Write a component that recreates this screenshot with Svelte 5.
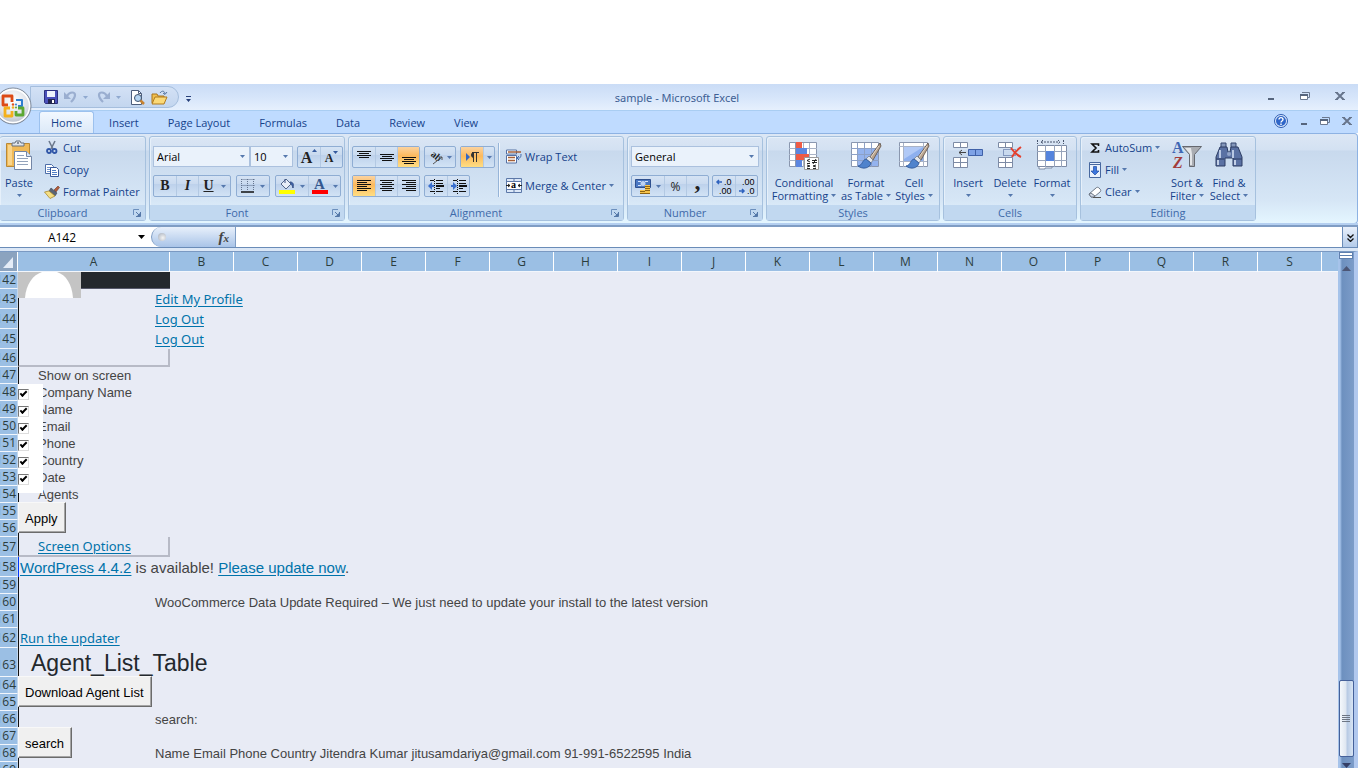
<!--
  Component: App.svelte
  Description: Spreadsheet window with ribbon, formula bar and an open worksheet.
-->
<script lang="ts">
	const tabs = ['Home', 'Insert', 'Page Layout', 'Formulas', 'Data', 'Review', 'View'];
	const columns = 'ABCDEFGHIJKLMNOPQRST'.split('');

	type Row = {
		n: number;
		size?: string;
		kind?: string;
		text?: string;
	};

	const rows: Row[] = [
		{ n: 142, kind: 'avatar' },
		{ n: 143, size: 'tall', kind: 'link', text: 'Edit My Profile' },
		{ n: 144, size: 'tall', kind: 'link', text: 'Log Out' },
		{ n: 145, size: 'tall', kind: 'link', text: 'Log Out' },
		{ n: 146, size: 'mid', kind: 'box' },
		{ n: 147, kind: 'indent', text: 'Show on screen' },
		{ n: 148, kind: 'check', text: 'Company Name' },
		{ n: 149, kind: 'check', text: 'Name' },
		{ n: 150, kind: 'check', text: 'Email' },
		{ n: 151, kind: 'check', text: 'Phone' },
		{ n: 152, kind: 'check', text: 'Country' },
		{ n: 153, kind: 'check', text: 'Date' },
		{ n: 154, kind: 'indent', text: 'Agents' },
		{ n: 155, kind: 'button', text: 'Apply' },
		{ n: 156 },
		{ n: 157, size: 'tall', kind: 'options', text: 'Screen Options' },
		{ n: 158, size: 'tall', kind: 'notice' },
		{ n: 159 },
		{
			n: 160,
			kind: 'far',
			text: 'WooCommerce Data Update Required – We just need to update your install to the latest version'
		},
		{ n: 161 },
		{ n: 162, size: 'tall', kind: 'run', text: 'Run the updater' },
		{ n: 163, size: 'heading', kind: 'heading', text: 'Agent_List_Table' },
		{ n: 164, kind: 'button', text: 'Download Agent List' },
		{ n: 165 },
		{ n: 166, kind: 'far', text: 'search:' },
		{ n: 167, kind: 'button', text: 'search' },
		{
			n: 168,
			kind: 'far',
			text: 'Name Email Phone Country Jitendra Kumar jitusamdariya@gmail.com 91-991-6522595 India'
		},
		{ n: 169 }
	];

	// line positions for the six align icons
	const vAlign = [
		{ name: 'Top Align', y: 3, on: false },
		{ name: 'Middle Align', y: 6, on: false },
		{ name: 'Bottom Align', y: 9, on: true }
	];
	const hAlign = [
		{ name: 'Align Left', on: true, lines: [[1, 15], [1, 11], [1, 15], [1, 11], [1, 15], [1, 11]] },
		{ name: 'Center', on: false, lines: [[1, 15], [3, 13], [1, 15], [3, 13], [1, 15], [3, 13]] },
		{ name: 'Align Right', on: false, lines: [[1, 15], [5, 15], [1, 15], [5, 15], [1, 15], [5, 15]] }
	];
</script>

{#snippet arrow()}
	<svg class="arrow" width="5" height="3" viewBox="0 0 5 3" aria-hidden="true"><path d="M0 0h5L2.500 3z" fill="#5578ad" /></svg>
{/snippet}

{#snippet caption(name: string, launcher: boolean)}
	<div class="caption">
		<span>{name}</span>
		{#if launcher}
			<button class="launcher" aria-label="{name} settings">
				<svg width="8" height="8" viewBox="0 0 8 8"><path d="M.5 6V.5H6" fill="none" stroke="#6c8fbd" /><path d="M3 3l3 3M7.500 3v4.500H3" fill="none" stroke="#5578a8" /><path d="M4 7h3V4z" fill="#5578a8" /></svg>
			</button>
		{/if}
	</div>
{/snippet}

{#snippet restore()}
	<svg width="10" height="8" viewBox="0 0 10 8"><path d="M2 .5h7.500v5H8" fill="none" stroke="#6b7990" /><path d="M.5 3v4.500h7V3" fill="#fff" stroke="#6b7990" /><path d="M0 3h8" stroke="#56657d" stroke-width="2" /></svg>
{/snippet}

{#snippet cross()}
	<svg width="10" height="8" viewBox="0 0 10 8"><path d="M1.500 .5l7 7M8.500 .5l-7 7" stroke="#67758c" stroke-width="2" /><path d="M0 .5h3M7 .5h3M0 7.500h3M7 7.500h3" stroke="#67758c" /></svg>
{/snippet}

{#snippet brush()}
	<path d="M30 3L20 17l3 3L31 6z" fill="#b9a48f" stroke="#5c4c42" stroke-width=".8" />
	<path d="M29 6l-8 11" stroke="#e6dacb" />
	<path d="M19 16l4 4-2 3-5-4z" fill="#e4e7ec" stroke="#6d7785" stroke-width=".7" />
	<path d="M16 19c-4 1-3 6-8 7 5 4 12 2 13-3z" fill="#4f83cc" stroke="#2d5596" stroke-width=".8" />
{/snippet}

<div class="window">
	<header class="titlebar">
		<button class="orb" aria-label="Office Button">
			<svg width="38" height="38" viewBox="0 0 38 38">
				<defs>
					<radialGradient id="orb" cx=".5" cy=".35" r=".7">
						<stop offset="0" stop-color="#fff" /><stop offset=".6" stop-color="#dde1e9" /><stop offset="1" stop-color="#a9b1bf" />
					</radialGradient>
				</defs>
				<circle cx="19" cy="19" r="18" fill="url(#orb)" stroke="#7e8999" />
				<circle cx="19" cy="19" r="16.500" fill="none" stroke="#fff" stroke-width="1.500" />
				<g fill="none" stroke-width="2.800" stroke-linejoin="round">
					<path d="M14 18H9V9h9v6" stroke="#dd4a16" />
					<path d="M22 13h6v6h-4" stroke="#2f7fd0" stroke-width="2" />
					<path d="M16 21h-5v8h7v-5" stroke="#f4b01c" />
					<path d="M24 21h5v7h-7v-4" stroke="#5ca832" />
				</g>
				<circle cx="19" cy="17.500" r="1.200" fill="#e0511c" /><circle cx="22" cy="17.500" r="1" fill="#2f7fd0" />
				<circle cx="19" cy="20.500" r="1.200" fill="#f4b01c" /><circle cx="22" cy="20.500" r="1" fill="#5ca832" />
			</svg>
		</button>
		<div class="quick">
			<button aria-label="Save">
				<svg width="14" height="14" viewBox="0 0 14 14"><path d="M.5 .5h13v13h-12l-1-1z" fill="#4a50ba" stroke="#2c307f" /><path d="M3 1h8v6H3z" fill="#eef3fc" /><path d="M4 9h7v5H4z" fill="#23264f" /><path d="M8 10h2v3H8z" fill="#fff" /></svg>
			</button>
			<button aria-label="Undo">
				<svg width="13" height="12" viewBox="0 0 13 12"><path d="M0 1v7h7z" fill="#9aaed0" /><path d="M3 5c3-5 8-4 8-1 0 3-2 5-4 7" fill="none" stroke="#9aaed0" stroke-width="2.200" /></svg>
			</button>
			<span class="pale">{@render arrow()}</span>
			<button aria-label="Redo">
				<svg width="13" height="12" viewBox="0 0 13 12"><path d="M13 1v7H6z" fill="#9aaed0" /><path d="M10 5C7 0 2 1 2 4c0 3 2 5 4 7" fill="none" stroke="#9aaed0" stroke-width="2.200" /></svg>
			</button>
			<span class="pale">{@render arrow()}</span>
			<button aria-label="Print Preview">
				<svg width="15" height="15" viewBox="0 0 15 15"><path d="M1.500 .5h7l3 3v11h-10z" fill="#fff" stroke="#4e5e7b" /><path d="M8.500 .5v3h3" fill="none" stroke="#4e5e7b" /><circle cx="8" cy="8" r="3.500" fill="#b5d4f1" stroke="#3e526e" /><path d="M10.500 10.500l3.500 3.500" stroke="#c7822f" stroke-width="2.500" /></svg>
			</button>
			<button aria-label="Open">
				<svg width="17" height="15" viewBox="0 0 17 15"><path d="M1 13V4h5l1 2h6v7z" fill="#f0c04f" stroke="#a9741d" /><path d="M1 14l3-7h12l-3 7z" fill="#fbd977" stroke="#b07b1f" /><path d="M9 3c2-3 5-2 5 1M12 3l2 1.500L16 2" fill="none" stroke="#55749f" /></svg>
			</button>
		</div>
		<button class="customize" aria-label="Customize Quick Access Toolbar">
			<svg width="5" height="6" viewBox="0 0 5 6"><path d="M0 0h5v1H0zM0 3h5L2.500 6z" fill="#27407a" /></svg>
		</button>
		<h1>sample - Microsoft Excel</h1>
		<div class="sys">
			<button aria-label="Minimize"><svg width="8" height="8" viewBox="0 0 8 8"><path d="M1 7h6" stroke="#56657d" stroke-width="2" /></svg></button>
			<button aria-label="Restore">{@render restore()}</button>
			<button aria-label="Close">{@render cross()}</button>
		</div>
	</header>

	<nav class="tabs">
		{#each tabs as tab, i}
			<button class="tab" class:active={i === 0}>{tab}</button>
		{/each}
		<div class="doc">
			<button aria-label="Help">
				<svg width="14" height="14" viewBox="0 0 14 14"><circle cx="7" cy="7" r="6.500" fill="#dce9fb" stroke="#2e5cb0" /><circle cx="7" cy="7" r="5" fill="#2f66c8" /><path d="M5 5.500c0-2.500 4-2.500 4 0 0 1.500-2 1.500-2 3M7 9.500V11" fill="none" stroke="#fff" stroke-width="1.400" /></svg>
			</button>
			<button aria-label="Minimize Window"><svg width="8" height="8" viewBox="0 0 8 8"><path d="M1 7h6" stroke="#56657d" stroke-width="2" /></svg></button>
			<button aria-label="Restore Window">{@render restore()}</button>
			<button aria-label="Close Window">{@render cross()}</button>
		</div>
	</nav>

	<section class="ribbon">
		<!-- Clipboard -->
		<div class="group clipboard">
			<div class="body">
				<button class="big">
					<svg width="28" height="30" viewBox="0 0 28 30">
						<path d="M1.500 3.500h23v23h-23z" fill="#f0b957" stroke="#b98836" /><path d="M3 5h4v20H3z" fill="#f9d48b" />
						<path d="M7 6V3h3l1-2h4l1 2h3v3z" fill="#dfe3ea" stroke="#66707f" /><circle cx="13" cy="3" r="1" fill="#66707f" />
						<path d="M9.500 11.500h12l5 5v13h-17z" fill="#fff" stroke="#7386a6" /><path d="M21.500 11.500v5h5" fill="#dbe6f5" stroke="#7386a6" />
						<path d="M12 15.500h7M12 18.500h11M12 21.500h11M12 24.500h11" stroke="#93a3bb" />
					</svg>
					<span>Paste</span>
					{@render arrow()}
				</button>
				<div class="stack">
					<button class="item">
						<svg width="16" height="15" viewBox="0 0 16 15"><path d="M5 1l4 8M11 1L7 9" stroke="#6e7b8f" stroke-width="1.600" /><circle cx="5" cy="11" r="2" fill="none" stroke="#3056a7" stroke-width="1.800" /><circle cx="10.500" cy="11" r="2" fill="none" stroke="#3056a7" stroke-width="1.800" /></svg>
						Cut
					</button>
					<button class="item">
						<svg width="16" height="14" viewBox="0 0 16 14"><path d="M1.500 1.500h6l2 2v7h-8z" fill="#fff" stroke="#4d6ea8" /><path d="M3 4.500h4M3 6.500h3M3 8.500h3" stroke="#6e93cd" /><path d="M6.500 4.500h6l2 2v7h-8z" fill="#fff" stroke="#37589a" /><path d="M8 7.500h4M8 9.500h5M8 11.500h5" stroke="#4f7cc4" /></svg>
						Copy
					</button>
					<button class="item">
						<svg width="16" height="14" viewBox="0 0 16 14"><path d="M10 5l4-4 1.500 1.500L12 7z" fill="#b05c3c" stroke="#733a24" stroke-width=".6" /><path d="M7 3l6 5-2 3-6-5z" fill="#5a6577" stroke="#3c4452" stroke-width=".6" /><path d="M5 6L.5 7 6 13.500 11 11z" fill="#f5df85" stroke="#a98a2e" stroke-width=".8" /></svg>
						Format Painter
					</button>
				</div>
			</div>
			{@render caption('Clipboard', true)}
		</div>

		<!-- Font -->
		<div class="group font">
			<div class="body rows">
				<div class="line">
					<div class="pair">
						<span class="drop family"><select aria-label="Font"><option>Arial</option></select>{@render arrow()}</span>
						<span class="drop size"><select aria-label="Font Size"><option>10</option></select>{@render arrow()}</span>
					</div>
					<div class="set">
						<button class="tool serif grow" aria-label="Increase Font Size">A<svg width="5" height="3" viewBox="0 0 5 3"><path d="M0 3h5L2.500 0z" fill="#355a9e" /></svg></button>
						<button class="tool serif shrink" aria-label="Decrease Font Size">A<svg width="5" height="3" viewBox="0 0 5 3"><path d="M0 0h5L2.500 3z" fill="#355a9e" /></svg></button>
					</div>
				</div>
				<div class="line">
					<div class="set">
						<button class="tool serif"><b>B</b></button>
						<button class="tool serif"><i>I</i></button>
						<button class="tool serif wide"><u>U</u>{@render arrow()}</button>
					</div>
					<div class="set">
						<button class="tool wider" aria-label="Borders">
							<svg width="14" height="14" viewBox="0 0 14 14"><path d="M.5 .5h13M.5 6.500h13M.5 0v12M6.500 0v12M12.500 0v12" stroke="#63738e" stroke-dasharray="1 1" /><path d="M0 13h13" stroke="#111" stroke-width="1.500" /></svg>
							{@render arrow()}
						</button>
					</div>
					<div class="set">
						<button class="tool wider" aria-label="Fill Color">
							<svg width="16" height="16" viewBox="0 0 16 16"><path d="M2 6l5-5 5 5-5 5z" fill="#e8eef7" stroke="#54678a" /><path d="M6 5V1M11 4c3 0 4 2 3 6-1-3-1-3-2-4z" fill="#3a65b3" stroke="#3a5286" /><path d="M0 12h16v4H0z" fill="#ff0" /></svg>
							{@render arrow()}
						</button>
						<button class="tool wider" aria-label="Font Color">
							<span class="fontcolor">A</span>
							{@render arrow()}
						</button>
					</div>
				</div>
			</div>
			{@render caption('Font', true)}
		</div>

		<!-- Alignment -->
		<div class="group alignment">
			<div class="body">
				<div class="rows">
					<div class="line">
						<div class="set">
							{#each vAlign as a}
								<button class="tool" class:on={a.on} aria-label={a.name}>
									<svg width="16" height="16" viewBox="0 0 16 16"><path d="M1 {a.y - 0.5}h14M3 {a.y + 1.5}h10M1 {a.y + 3.5}h14M3 {a.y + 5.5}h10" stroke="#111" /></svg>
								</button>
							{/each}
						</div>
						<div class="set">
							<button class="tool orient" aria-label="Orientation">
								<svg width="16" height="16" viewBox="0 0 16 16"><text x="2" y="7" font-size="10" font-family="Liberation Serif, serif" font-weight="bold" transform="rotate(40 3 7)" fill="#222">ab</text><path d="M5 15l9-7M11 8h3v3" fill="none" stroke="#555" /></svg>
								{@render arrow()}
							</button>
						</div>
						<div class="set">
							<button class="tool on" aria-label="Text Direction">
								<svg width="14" height="12" viewBox="0 0 14 12"><path d="M1 2l4 4-4 4z" fill="#3467c4" /><path d="M8.500 2v9M11.500 2v9M7 1.500h7" stroke="#333" /><path d="M9 1c-4 0-4 6 0 6z" fill="#333" /></svg>
							</button>
							<button class="tool slim" aria-label="Text Direction options">{@render arrow()}</button>
						</div>
					</div>
					<div class="line">
						<div class="set">
							{#each hAlign as a}
								<button class="tool" class:on={a.on} aria-label={a.name}>
									<svg width="16" height="14" viewBox="0 0 16 14">
										{#each a.lines as [x1, x2], i}<path d="M{x1} {i * 2 + 1.5}H{x2}" stroke="#111" />{/each}
									</svg>
								</button>
							{/each}
						</div>
						<div class="set">
							<button class="tool" aria-label="Decrease Indent">
								<svg width="16" height="15" viewBox="0 0 16 15"><path d="M2 1.500h4M8 1.500h7M8 4.500h7M8 9.500h4M2 12.500h4M8 12.500h7" stroke="#111" /><path d="M8 7h8" stroke="#111" stroke-width="2" /><path d="M6.500 0v15" stroke="#111" stroke-dasharray="1 1" /><path d="M0 7l4-4v3h2v2H4v3z" fill="#3a6fce" /></svg>
							</button>
							<button class="tool" aria-label="Increase Indent">
								<svg width="16" height="15" viewBox="0 0 16 15"><path d="M2 1.500h4M8 1.500h7M8 4.500h7M8 9.500h4M2 12.500h4M8 12.500h7" stroke="#111" /><path d="M8 7h8" stroke="#111" stroke-width="2" /><path d="M6.500 0v15" stroke="#111" stroke-dasharray="1 1" /><path d="M6 7L2 3v3H0v2h2v3z" fill="#3a6fce" /></svg>
							</button>
						</div>
					</div>
				</div>
				<div class="rule"></div>
				<div class="rows merge">
					<button class="item">
						<svg width="16" height="15" viewBox="0 0 16 15"><path d="M.5 1h10v4H.5zM.5 6.500h10v7.500H.5z" fill="#fff" stroke="#5470a3" /><path d="M2 3h13M2 8.500h7M2 11.500h7" stroke="#a56038" stroke-width="1.500" /><path d="M15 5c0 4-1 4-3 4M13 7l-2 2 2 2" fill="none" stroke="#3e67ac" /></svg>
						Wrap Text
					</button>
					<button class="item">
						<svg width="16" height="15" viewBox="0 0 16 15"><path d="M.5 .5h15v14H.5zM.5 3.500h15M.5 11.500h15M8 .5v3M8 11.500v3" fill="#dce8f8" stroke="#5c78a8" /><path d="M1 4h14v7H1z" fill="#fff" /><path d="M0 7.500h4M2 6l2 1.500L2 9M16 7.500h-4M14 6l-2 1.500L14 9" fill="none" stroke="#222" /><text x="5" y="10" font-size="10" font-weight="bold" font-family="Liberation Serif, serif">a</text></svg>
						Merge &amp; Center
						{@render arrow()}
					</button>
				</div>
			</div>
			{@render caption('Alignment', true)}
		</div>

		<!-- Number -->
		<div class="group number">
			<div class="body rows">
				<div class="line">
					<span class="drop format"><select aria-label="Number Format"><option>General</option></select>{@render arrow()}</span>
				</div>
				<div class="line">
					<div class="set">
						<button class="tool wider" aria-label="Accounting Number Format">
							<svg width="16" height="16" viewBox="0 0 16 16"><path d="M.5 1.500h15v8H.5z" fill="#4b78c4" stroke="#2f508e" /><path d="M3 3.500h3M3 7.500h3M10 3.500h3" stroke="#d8e5fa" /><circle cx="8" cy="5.500" r="2.500" fill="#bcd2f4" /><path d="M10 7h5v8h-5zM5 12h5v3H5z" fill="#f6c34a" /><path d="M10 8.500h5M10 10.500h5M10 12.500h5M5 13.500h5M5 15.500h10" stroke="#8e6413" /></svg>
							{@render arrow()}
						</button>
						<button class="tool">%</button>
						<button class="tool serif comma"><b>,</b></button>
					</div>
					<div class="set">
						<button class="tool" aria-label="Increase Decimal"><svg width="18" height="20" viewBox="0 0 18 20"><text x="9" y="9" font-size="9">.0</text><text x="4" y="18" font-size="9">.00</text><path d="M7 6H2M4 4L2 6l2 2" fill="none" stroke="#2f63bf" stroke-width="1.500" /></svg></button>
						<button class="tool" aria-label="Decrease Decimal"><svg width="18" height="20" viewBox="0 0 18 20"><text x="4" y="9" font-size="9">.00</text><text x="9" y="18" font-size="9">.0</text><path d="M1 15h5M4 13l2 2-2 2" fill="none" stroke="#2f63bf" stroke-width="1.500" /></svg></button>
					</div>
				</div>
			</div>
			{@render caption('Number', true)}
		</div>

		<!-- Styles -->
		<div class="group styles">
			<div class="body">
				<button class="big cond">
					<svg width="32" height="30" viewBox="0 0 32 30">
						<path d="M1.500 2.500h27v24h-27z" fill="#fff" stroke="#8a97af" /><path d="M1 8.500h28M1 14.500h28M1 20.500h28M15.500 3v24M21.500 3v24" stroke="#a9b3c6" />
						<path d="M8 2h6v6H8zM8 14h13v6H8z" fill="#ee5b45" /><path d="M8 8h11v6H8zM8 20h6v7H8z" fill="#5c86e0" /><path d="M7.500 2v25" stroke="#8a97af" />
						<path d="M16.500 17.500h14v12h-14z" fill="#fff" stroke="#999" /><path d="M22 19l-3 1.500 3 1.500M19 23.500h3M24 20.500h5M24 22.500h5M28 19l-3 5M19 25l3 1-3 1M19 28.500h3M28 25l-3 1 3 1M25 28.500h3" fill="none" stroke="#111" stroke-width=".9" />
					</svg>
					<span>Conditional</span><span>Formatting {@render arrow()}</span>
				</button>
				<button class="big table">
					<svg width="32" height="30" viewBox="0 0 32 30">
						<path d="M1.500 2.500h27v24h-27z" fill="#fff" stroke="#8a97af" /><path d="M8 9h20v17H8z" fill="#94b3ee" />
						<path d="M1 8.500h28M1 14.500h28M1 20.500h28M7.500 3v24M14.500 3v24M21.500 3v24" stroke="#8da1c6" />
						{@render brush()}
					</svg>
					<span>Format</span><span>as Table {@render arrow()}</span>
				</button>
				<button class="big cell">
					<svg width="32" height="30" viewBox="0 0 32 30">
						<path d="M1.500 2.500h28v24h-28z" fill="#fff" stroke="#8a97af" /><path d="M1 6.500h28M1 21.500h28M5.500 3v24M25.500 3v24" stroke="#a9b3c6" />
						<path d="M6 7h19v14H6z" fill="#8eb0ef" /><path d="M6 7h19L6 19z" fill="#b1c9f6" />
						{@render brush()}
					</svg>
					<span>Cell</span><span>Styles {@render arrow()}</span>
				</button>
			</div>
			{@render caption('Styles', false)}
		</div>

		<!-- Cells -->
		<div class="group cells">
			<div class="body">
				<button class="big">
					<svg width="32" height="30" viewBox="0 0 32 30">
						<path d="M1.500 2.500h14v5h-14zM8.500 2.500v5M1.500 17.500h14v10h-14zM8.500 17.500v10M1.500 22.500h14" fill="#fff" stroke="#7d8ba5" />
						<path d="M16.500 9.500h14v6h-14z" fill="#7ea2e6" stroke="#3f61a8" /><path d="M23.500 9.500v6" stroke="#3f61a8" /><path d="M14 12.500H7M10 10l-3 2.500L10 15" fill="none" stroke="#444" />
					</svg>
					<span>Insert</span>
					{@render arrow()}
				</button>
				<button class="big">
					<svg width="32" height="30" viewBox="0 0 32 30">
						<path d="M4.500 2.500h14v5h-14zM11.500 2.500v5M4.500 17.500h14v10h-14zM11.500 17.500v10M4.500 22.500h14" fill="#fff" stroke="#7d8ba5" />
						<path d="M9.500 9.500h12v6h-12z" fill="none" stroke="#3d5690" stroke-dasharray="1 1" /><path d="M17 8c3 4 5 7 10 9M27 7c-4 3-7 6-9 10" fill="none" stroke="#e5402e" stroke-width="2" />
					</svg>
					<span>Delete</span>
					{@render arrow()}
				</button>
				<button class="big">
					<svg width="32" height="30" viewBox="0 0 32 30">
						<path d="M1.500 0v4M27.500 0v4M5 2h18M7 0L5 2l2 2M22 0l2 2-2 2" fill="none" stroke="#46536b" stroke-dasharray="2 1" />
						<path d="M1.500 5.500h29v21h-29z" fill="#fff" stroke="#7d8ba5" /><path d="M1 11.500h30M1 20.500h30M9.500 5v22M18.500 5v22M25.500 5v22" stroke="#97a4bb" /><path d="M10 11h8v10h-8z" fill="#5584dd" />
						<path d="M3 27v2h6v-1h7v-1" fill="#fff" stroke="#7d8ba5" />
					</svg>
					<span>Format</span>
					{@render arrow()}
				</button>
			</div>
			{@render caption('Cells', false)}
		</div>

		<!-- Editing -->
		<div class="group editing">
			<div class="body">
				<div class="stack">
					<button class="item">
						<svg width="14" height="14" viewBox="0 0 14 14"><path d="M10.500 5V3H4l4 4-4 4h6.500V9" fill="none" stroke="#111" stroke-width="1.600" /></svg>
						AutoSum {@render arrow()}
					</button>
					<button class="item">
						<svg width="14" height="16" viewBox="0 0 14 16"><path d="M1.500 .5h11v15h-11z" fill="#e9f1fd" stroke="#47689f" /><path d="M1 2.500h12" stroke="#47689f" /><path d="M5.500 4.500h3V9h2.500l-4 4-4-4h2.500z" fill="#3c76de" stroke="#1f4ca0" stroke-width=".7" /></svg>
						Fill {@render arrow()}
					</button>
					<button class="item">
						<svg width="14" height="14" viewBox="0 0 14 14"><path d="M1 9l7-6c1-1 2-1 3 0l1 1c1 1 1 2 0 3l-6 5H3z" fill="#fff" stroke="#6d7786" /><path d="M1 9l2 3h3l1-1-4-3z" fill="#cfd6e2" stroke="#6d7786" /><path d="M5 12.500h8" stroke="#555" /></svg>
						Clear {@render arrow()}
					</button>
				</div>
				<button class="big">
					<svg width="32" height="30" viewBox="0 0 32 30">
						<text x="1" y="13" font-size="16" font-weight="bold" font-family="Liberation Serif, serif" fill="#3f66b3">A</text>
						<text x="2" y="28" font-size="16" font-weight="bold" font-style="italic" font-family="Liberation Serif, serif" fill="#a23c3c">Z</text>
						<path d="M11.500 6.500h19l-7 8v12h-5v-12z" fill="#a9acb2" stroke="#65686f" /><path d="M14 8h6l1 6v11h-2V14z" fill="#e3e5e8" />
					</svg>
					<span>Sort &amp;</span><span>Filter {@render arrow()}</span>
				</button>
				<button class="big">
					<svg width="32" height="30" viewBox="0 0 32 30">
						<path d="M8 3h5v5H8zM18 3h5v5h-5z" fill="#8396ba" stroke="#34466f" /><path d="M7 7h7l1 5h2l1-5h7l4 10v9h-9v-8h-8v8H3v-9z" fill="#5a71a3" stroke="#2c3c63" />
						<path d="M7 10v8M20 10v8" stroke="#b9c8e3" stroke-width="2" /><path d="M3 19h8M20 19h9" stroke="#2c3c63" /><path d="M5 20v5M22 20v5" stroke="#c2cfe6" stroke-width="2" /><circle cx="16" cy="14" r="2" fill="#93a5c9" />
					</svg>
					<span>Find &amp;</span><span>Select {@render arrow()}</span>
				</button>
			</div>
			{@render caption('Editing', false)}
		</div>
	</section>

	<div class="formula">
		<input class="namebox" aria-label="Name Box" value="A142" />
		<button class="namedrop" aria-label="Defined names"><svg width="7" height="4" viewBox="0 0 7 4"><path d="M0 0h7L3.500 4z" /></svg></button>
		<div class="fx">
			<span class="knob"></span>
			<button aria-label="Insert Function"><i>f</i><small>x</small></button>
		</div>
		<input class="value" aria-label="Formula Bar" />
		<button class="expand" aria-label="Expand Formula Bar"><svg width="7" height="8" viewBox="0 0 7 8"><path d="M.5 .5l3 3 3-3M.5 4.500l3 3 3-3" fill="none" stroke="#111" stroke-width="1.300" /></svg></button>
	</div>

	<div class="sheet">
		<div class="grid">
			<table>
				<thead>
					<tr>
						<th class="corner"><svg width="10" height="11" viewBox="0 0 10 11" aria-hidden="true"><path d="M10 0v11H0z" fill="#e4ecf7" /></svg></th>
						{#each columns as col}
							<th class:first={col === 'A'}>{col}</th>
						{/each}
					</tr>
				</thead>
				<tbody>
					{#each rows as row}
						<tr class={row.size}>
							<th><span>{row.n}</span></th>
							<td class={row.kind}>
								{#if row.kind === 'avatar'}
									<svg class="face" width="63" height="26" viewBox="0 0 63 26" role="img" aria-label="Avatar"><path d="M0 0h63v26H0z" fill="#c4c4c4" /><path d="M7 26C8 12 15 3 24 0h15c9 3 15 12 16 26z" fill="#fff" /></svg>
								{:else if row.kind === 'link' || row.kind === 'options' || row.kind === 'run'}
									<a href="#{row.n}">{row.text}</a>
								{:else if row.kind === 'check'}
									<label><input type="checkbox" checked /><span>{row.text}</span></label>
								{:else if row.kind === 'button'}
									<button>{row.text}</button>
								{:else if row.kind === 'notice'}
									<a href="#wordpress">WordPress 4.4.2</a> is available! <a href="#update">Please update now</a>.
								{:else if row.text}
									{row.text}
								{/if}
							</td>
							<td colspan={columns.length - 1}></td>
						</tr>
					{/each}
				</tbody>
			</table>
		</div>
		<div class="scroll">
			<div class="split"></div>
			<svg width="9" height="5" viewBox="0 0 9 5" aria-hidden="true"><path d="M0 5h9L4.500 0z" fill="#4c5676" /></svg>
			<div class="track"></div>
			<div class="thumb"><i></i><i></i><i></i><i></i></div>
			<div class="tail"></div>
			<svg width="9" height="5" viewBox="0 0 9 5" aria-hidden="true"><path d="M0 0h9L4.500 5z" fill="#343f66" /></svg>
		</div>
	</div>
</div>

<style>
	:global(body) {
		background: #fff;
		font-family: 'Open Sans', 'Noto Sans', sans-serif;
		font-size: 11px;
		color: #15428b;
	}

	button {
		font: inherit;
		color: inherit;
		border: 0;
		padding: 0;
		background: none;
	}

	svg {
		flex: none;
	}

	.window {
		box-sizing: border-box;
		height: 100vh;
		padding: 84px 8px 0 0;
		display: flex;
		flex-direction: column;
		overflow: hidden;
	}

	/* --- Title bar --- */
	.titlebar {
		box-sizing: border-box;
		position: relative;
		height: 27px;
		flex: none;
		display: flex;
		align-items: center;
		background: linear-gradient(#cadcf6, #d6e5fa 50%, #e6f0fd);
		border-bottom: 1px solid #a9cdf2;
	}

	.orb {
		position: absolute;
		left: -6px;
		top: 3px;
		z-index: 2;
	}

	.orb svg {
		display: block;
	}

	.quick {
		box-sizing: border-box;
		display: flex;
		align-items: center;
		gap: 6px;
		width: 149px;
		height: 22px;
		margin-left: 30px;
		padding-left: 13px;
		border: 1px solid #a5bedd;
		border-radius: 0 11px 11px 0;
		background: linear-gradient(#d3e1f5, #c3d6ef);
	}

	.quick button {
		display: flex;
	}

	.quick .pale {
		display: flex;
		opacity: 0.5;
		margin: 0 3px 0 0;
	}

	.customize {
		width: 18px;
	}

	h1 {
		flex: 1;
		margin: 0;
		padding-right: 110px;
		text-align: center;
		font-family: 'Noto Sans', sans-serif;
		font-size: 11px;
		font-weight: 400;
		color: #3e5f94;
	}

	.sys,
	.doc {
		display: flex;
		align-items: center;
	}

	.sys {
		gap: 25px;
		padding: 0 13px 3px 0;
	}

	.sys button,
	.doc button {
		display: flex;
	}

	/* --- Tabs --- */
	.tabs {
		flex: none;
		display: flex;
		height: 22px;
		padding-left: 39px;
		background: #bfdbff;
	}

	.tab {
		padding: 1px 14px 0 15px;
		line-height: 21px;
	}

	.tab.active {
		padding: 0 11px;
		border: 1px solid #9cc1ee;
		border-bottom: 0;
		border-radius: 3px 3px 0 0;
		background: linear-gradient(#f2f8ff, #dce9f8);
	}

	.doc {
		gap: 12px;
		margin-left: auto;
		padding: 0 6px 2px 0;
	}

	/* --- Ribbon --- */
	.ribbon {
		box-sizing: border-box;
		flex: none;
		display: flex;
		gap: 3px;
		height: 91px;
		padding: 2px 0;
		border: 1px solid #8db2e3;
		border-left: 0;
		border-radius: 0 4px 4px 0;
		background: linear-gradient(#dce7f5, #d3e1f2 18%, #c8d9ed 19%, #d6e6f6 75%, #e4f6ff);
		overflow: hidden;
	}

	.group {
		box-sizing: border-box;
		flex: none;
		display: flex;
		flex-direction: column;
		border: 1px solid #a6c1de;
		border-radius: 3px;
		box-shadow: inset 1px 1px 0 #e6f0fa;
	}

	.clipboard {
		width: 146px;
		border-left: 0;
	}

	.font {
		width: 196px;
	}

	.alignment {
		width: 276px;
	}

	.number {
		width: 136px;
	}

	.styles {
		width: 174px;
	}

	.cells {
		width: 134px;
	}

	.editing {
		width: 176px;
	}

	.body {
		flex: 1;
		display: flex;
		padding: 0 3px;
	}

	.caption {
		display: flex;
		height: 15px;
		line-height: 15px;
		background: #c1d8f0;
		color: #3e6aaa;
	}

	.caption span {
		flex: 1;
		text-align: center;
	}

	.caption:has(.launcher) span {
		padding-right: 20px;
	}

	.launcher {
		display: flex;
		align-items: center;
		width: 12px;
		margin-left: -12px;
	}

	.big {
		width: 42px;
		flex: none;
		display: flex;
		flex-direction: column;
		align-items: center;
		padding-top: 3px;
	}

	.big span {
		display: flex;
		align-items: center;
		gap: 3px;
		line-height: 13px;
		white-space: nowrap;
	}

	.big > svg:first-child {
		margin-bottom: 6px;
	}

	.big > .arrow {
		margin-top: 5px;
	}

	.clipboard .big {
		width: 36px;
	}

	.clipboard .body {
		padding: 0 1px;
	}

	.big.cond {
		width: 68px;
	}

	.big.table {
		width: 56px;
	}

	.big.cell {
		width: 40px;
	}

	.stack {
		display: flex;
		flex-direction: column;
		padding-left: 7px;
	}

	.editing .stack {
		width: 78px;
		padding-left: 4px;
	}

	.item {
		display: flex;
		align-items: center;
		gap: 3px;
		height: 22px;
		white-space: nowrap;
	}

	.stack .item {
		padding-bottom: 1px;
	}

	.rows {
		display: flex;
		flex-direction: column;
		gap: 8px;
		padding-top: 9px;
	}

	.merge .item {
		height: 21px;
	}

	.line {
		display: flex;
		gap: 4px;
		height: 21px;
	}

	.font .line {
		justify-content: space-between;
	}

	.pair {
		display: flex;
	}

	.drop {
		position: relative;
		height: 21px;
	}

	.drop select {
		box-sizing: border-box;
		appearance: none;
		width: 100%;
		height: 21px;
		margin: 0;
		padding: 0 3px;
		border: 1px solid #abc1de;
		border-radius: 0;
		background: #eaf2fb;
		font: inherit;
		color: #000;
	}

	.drop .arrow {
		position: absolute;
		right: 5px;
		top: 9px;
		pointer-events: none;
	}

	.family {
		width: 97px;
	}

	.size {
		width: 43px;
	}

	.format {
		width: 128px;
	}

	.set {
		box-sizing: border-box;
		display: flex;
		height: 22px;
		border: 1px solid #8fadd3;
		border-radius: 2px;
		background: linear-gradient(#d5e3f4, #c9daef 40%, #bdd1eb 41%, #d2e3f5);
	}

	.tool {
		display: flex;
		align-items: center;
		justify-content: center;
		gap: 3px;
		width: 22px;
		color: #222;
	}

	.tool + .tool {
		border-left: 1px solid #b3c9e3;
	}

	.tool.on {
		background: linear-gradient(#fbd3a0, #fcb95c 45%, #ffde83);
	}

	.tool.slim {
		width: 11px;
	}

	.tool.wide {
		width: 32px;
		gap: 7px;
	}

	.tool.wider {
		width: 32px;
		gap: 5px;
	}

	.tool.orient {
		width: 30px;
	}

	.serif {
		font: 700 14px 'Liberation Serif', serif;
	}

	.grow,
	.shrink {
		align-items: flex-start;
		gap: 0;
		padding-top: 2px;
	}

	.grow {
		font-size: 16px;
	}

	.shrink {
		font-size: 12px;
		padding-top: 4px;
	}

	.number .tool text {
		font-family: 'Liberation Sans', sans-serif;
	}

	.number .tool {
		font-size: 12px;
	}

	.number .comma {
		font-size: 24px;
		line-height: 10px;
		align-items: flex-start;
	}

	.number .line {
		gap: 3px;
	}

	.fontcolor {
		width: 16px;
		border-bottom: 4px solid #f00;
		font: 700 15px/12px 'Liberation Serif', serif;
		color: #34588f;
		text-align: center;
	}

	.rule {
		width: 1px;
		height: 54px;
		margin: 6px 6px 0 3px;
		background: #96b4d8;
		border-right: 1px solid #f0f6fd;
	}

	/* --- Formula bar --- */
	.formula {
		flex: none;
		display: flex;
		height: 20px;
		margin-top: 1px;
		border-top: 2px solid #7f9dc4;
		border-bottom: 1px solid #6a8cb8;
		background: #fff;
		box-shadow: 0 -2px 0 #b4cff0;
	}

	.formula input {
		box-sizing: border-box;
		border: 0;
		padding: 0;
		margin: 0;
		background: #fff;
		color: #000;
		font: 12px 'Open Sans', sans-serif;
		outline: 0;
	}

	.namebox {
		width: 124px;
		text-align: center;
	}

	.namedrop {
		display: flex;
		align-items: center;
		justify-content: center;
		width: 35px;
	}

	.fx {
		box-sizing: border-box;
		display: flex;
		align-items: center;
		justify-content: space-between;
		width: 85px;
		margin-left: -8px;
		padding: 0 6px;
		border: 1px solid #7f9dc4;
		border-width: 0 1px;
		border-radius: 11px 0 0 11px;
		background: linear-gradient(#e8f0fb, #a9c4e8);
	}

	.fx button {
		font: italic 700 15px/16px 'Liberation Serif', serif;
		color: #444;
	}

	.fx small {
		font-size: 11px;
	}

	.knob {
		width: 8px;
		height: 8px;
		border-radius: 50%;
		background: radial-gradient(circle at 60% 60%, #f4f4f4, #a3acba);
	}

	.formula .value {
		flex: 1;
		min-width: 0;
	}

	.expand {
		width: 16px;
		border: 1px solid #6a8cb8;
		border-width: 0 1px;
		background: linear-gradient(#e8f0fb, #b3cbea);
	}

	/* --- Worksheet --- */
	.sheet {
		flex: 1;
		min-height: 0;
		display: flex;
		border-top: 1px solid #7a99c2;
		box-shadow: 0 -3px 0 #dbe7f6;
		margin-top: 3px;
		border-right: 4px solid #b1c8ee;
	}

	.grid {
		flex: 1;
		min-width: 0;
		overflow: hidden;
		background: #e8ebf5;
	}

	table {
		width: 1386px;
		table-layout: fixed;
		border-collapse: separate;
		border-spacing: 0;
	}

	th {
		box-sizing: border-box;
		padding: 0;
		height: 17px;
		border: 1px solid #f2f6fc;
		border-width: 0 1px 1px 0;
		background: #9bbfe4;
		font-size: 12px;
		font-weight: 400;
		line-height: 16px;
		color: #2b3d3d;
		width: 64px;
	}

	thead th {
		height: 20px;
		border-right-color: #fff;
	}

	.corner {
		width: 18px;
		background: #8ba3bf;
		text-align: right;
		vertical-align: bottom;
	}

	.corner svg {
		display: block;
		margin: 0 4px 3px auto;
	}

	.first {
		width: 152px;
	}

	/* the gutter is narrow, so the leading digit runs out to the left */
	tbody th span {
		display: flex;
		justify-content: flex-end;
		width: 16px;
	}

	tbody th {
		vertical-align: bottom;
		border-right: 1px solid #c2d7ee;
	}

	td {
		box-sizing: border-box;
		position: relative;
		padding: 0;
		font: 13px/16px 'Liberation Sans', Arial, sans-serif;
		color: #444;
		white-space: nowrap;
	}

	td:nth-child(2) {
		border-left: 1px solid #111;
	}

	td:last-child {
		pointer-events: none;
	}

	.tall th {
		height: 20px;
		line-height: 19px;
	}

	.mid th {
		height: 18px;
	}

	.heading th {
		height: 29px;
		line-height: 22px;
	}

	td a {
		color: #0073aa;
		font-family: 'Noto Sans', sans-serif;
		text-underline-offset: 2px;
	}

	.link,
	.far {
		padding-left: 136px;
	}

	.indent {
		padding-left: 19px;
	}

	td.box,
	td.options {
		border-right: 2px solid #b7bac6;
		border-bottom: 2px solid #b7bac6;
	}

	.options {
		padding-left: 19px;
	}

	.run,
	.notice {
		padding-left: 1px;
	}

	.notice,
	.notice a {
		font: 15px/19px 'Liberation Sans', Arial, sans-serif;
	}

	td:nth-child(2).notice {
		border-left-color: #0037ff;
	}

	td.heading {
		padding-left: 12px;
		font-size: 23px;
		line-height: 28px;
		color: #23282d;
	}

	.avatar {
		background: #23282d;
		border-bottom: 1px solid #55586a;
	}

	.face {
		position: absolute;
		left: -1px;
		top: 0;
		z-index: 1;
	}

	.check label {
		display: block;
		padding-left: 19px;
	}

	/* form controls float above the cells on their own white plate */
	.check label::before {
		content: '';
		position: absolute;
		left: -1px;
		top: 0;
		width: 25px;
		height: 24px;
		background: #fff;
		z-index: 1;
	}

	.check input {
		appearance: none;
		position: absolute;
		left: -1px;
		top: 5px;
		z-index: 2;
		box-sizing: border-box;
		width: 11px;
		height: 11px;
		margin: 0;
		border: 1px solid #777;
		border-color: #777 #ddd #ddd #777;
	}

	.check input:checked::before {
		content: '';
		position: absolute;
		left: 1px;
		top: 1px;
		width: 5px;
		height: 2px;
		border: 2px solid #000;
		border-width: 0 0 2px 2px;
		transform: rotate(-45deg);
	}

	td.button button {
		position: absolute;
		left: -1px;
		top: -1px;
		z-index: 3;
		height: 31px;
		padding: 2px 7px 0 6px;
		border: 1px solid #f8f8f8;
		border-color: #f8f8f8 #6b6b6b #6b6b6b #f8f8f8;
		box-shadow: inset -1px -1px 0 #a5a5a5;
		background: #f0f0f0;
		color: #000;
	}

	/* --- Scrollbar --- */
	.scroll {
		width: 16px;
		display: flex;
		flex-direction: column;
		align-items: center;
		background: linear-gradient(90deg, #a6c3ea 2px, #6d90bf 4px, #7c9cc9);
	}

	.split {
		box-sizing: border-box;
		width: 14px;
		height: 7px;
		margin-bottom: 7px;
		border: 1px solid #5e7fae;
		background: linear-gradient(#fff 2px, #5e7fae 2px, #5e7fae 3px, #fff 3px);
	}

	.track {
		flex: 1;
	}

	.thumb {
		box-sizing: border-box;
		display: flex;
		flex-direction: column;
		align-items: center;
		justify-content: center;
		gap: 1px;
		width: 15px;
		height: 77px;
		border: 1px solid #45619a;
		border-radius: 2px;
		background: linear-gradient(90deg, #f4f8fc, #dfe7f1 45%, #b7cae4 55%, #d8e5f5);
	}

	.thumb i {
		width: 8px;
		height: 1px;
		background: #6d7684;
	}

	.tail {
		height: 6px;
	}
</style>
